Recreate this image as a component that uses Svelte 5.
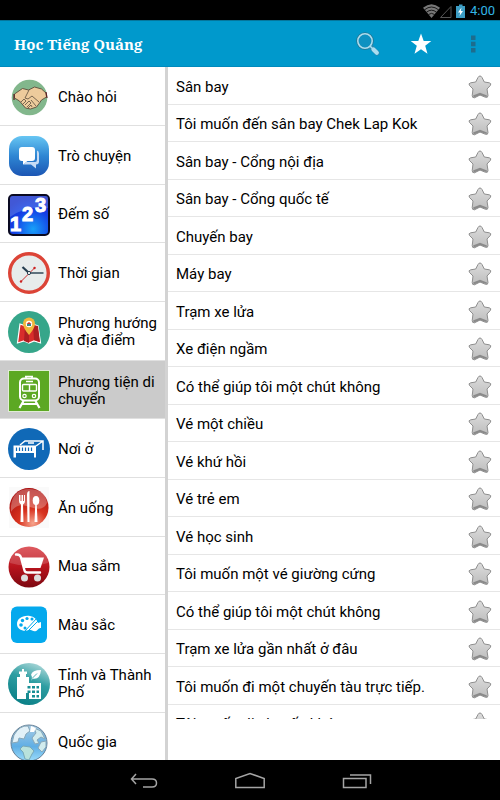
<script lang="ts">
  type Category = { icon: string; name: string };

  const categories: Category[] = [
    { icon: 'hands', name: 'Chào hỏi' },
    { icon: 'chat', name: 'Trò chuyện' },
    { icon: 'numbers', name: 'Đếm số' },
    { icon: 'clock', name: 'Thời gian' },
    { icon: 'map', name: 'Phương hướng và địa điểm' },
    { icon: 'train', name: 'Phương tiện di chuyển' },
    { icon: 'bed', name: 'Nơi ở' },
    { icon: 'food', name: 'Ăn uống' },
    { icon: 'cart', name: 'Mua sắm' },
    { icon: 'palette', name: 'Màu sắc' },
    { icon: 'city', name: 'Tỉnh và Thành Phố' },
    { icon: 'globe', name: 'Quốc gia' },
  ];

  const phrases = [
    'Sân bay',
    'Tôi muốn đến sân bay Chek Lap Kok',
    'Sân bay - Cổng nội địa',
    'Sân bay - Cổng quốc tế',
    'Chuyến bay',
    'Máy bay',
    'Trạm xe lửa',
    'Xe điện ngầm',
    'Có thể giúp tôi một chút không',
    'Vé một chiều',
    'Vé khứ hồi',
    'Vé trẻ em',
    'Vé học sinh',
    'Tôi muốn một vé giường cứng',
    'Có thể giúp tôi một chút không',
    'Trạm xe lửa gần nhất ở đâu',
    'Tôi muốn đi một chuyến tàu trực tiếp.',
    'Tôi muốn đi chuyến khác',
  ];

  let selected = $state(5);
  let starred: boolean[] = $state(phrases.map(() => false));
</script>

<div class="app">
  <div class="status-bar">
    <svg width="42" height="16" viewBox="0 0 42 16" aria-hidden="true">
      <path d="M0 4.800Q8.500-2.500 17 4.800L8.500 15Z" fill="#777" />
      <path d="M1.500 6.800Q8.500 1.200 15.500 6.800M3.500 9.200Q8.500 5.200 13.500 9.200M5.500 11.500Q8.500 9.200 11.500 11.500" fill="none" stroke="#000" stroke-width=".8" />
      <path d="M17.500 14.500H28V3.500Z" fill="none" stroke="#555" />
      <path d="M33 3h3V1.500h3.500V3H42v12h-9Z" fill="#3d9dc4" />
      <path d="M38.500 4.500L35 9.500h2.200l-.7 3.500L40 8h-2.200Z" fill="#fff" />
    </svg>
    <span>4:00</span>
  </div>

  <header class="action-bar">
    <h1>Học Tiếng Quảng</h1>
    <button aria-label="Tìm kiếm">
      <svg width="24" height="24" viewBox="0 0 24 24">
        <circle cx="9" cy="9" r="7.600" fill="#0e91c1" stroke="#24738f" stroke-width="2.400" />
        <path d="M15 15l6 6" stroke="#2b88ac" stroke-width="5" stroke-linecap="round" />
        <circle cx="9" cy="9" r="7.200" fill="none" stroke="#a9ddf0" stroke-width="1.600" />
        <path d="M14 14l3 3" stroke="#a9ddf0" stroke-width="1.500" />
        <path d="M17.500 17.500l3.300 3.300" stroke="#a9ddf0" stroke-width="4.200" stroke-linecap="round" />
      </svg>
    </button>
    <button aria-label="Yêu thích">
      <svg width="24" height="24" viewBox="0 0 24 24">
        <path d="M12 1.500l2.700 7.500h7.600l-6.100 4.800 2.300 8L12 17.200l-6.500 4.600 2.300-8L1.700 9h7.600Z" fill="#fff" />
      </svg>
    </button>
    <button aria-label="Thêm">
      <svg width="24" height="24" viewBox="0 0 24 24">
        <path d="M9 3.500h4.500v4.500H9zM9 9.800h4.500v4.500H9zM9 16h4.500v4.500H9z" fill="#1d6d8d" />
      </svg>
    </button>
  </header>

  <main>
    <nav class="categories">
      {#each categories as category, i}
        <button class="category" class:selected={selected === i} onclick={() => (selected = i)}>
          <svg width="42" height="42" viewBox="0 0 42 42" aria-hidden="true">
            {#if category.icon === 'hands'}
              <circle cx="21.500" cy="21.500" r="17.800" fill="#82b78c" />
              <path d="M6.500 18l8-5.500 6 1.500 6-3 7 2 4.500 4 .5 4-5 3-2 3-3 4-6 2-5-1-6-7-5-3Z" fill="#edcb9c" stroke="#5c4c3c" stroke-width=".9" />
              <path d="M13 26l3-3 2 2-3 3M17 29l4-4 2 2-4 4M20 32l3-3 1 2M28 30l-5-6M31 26l-7-6-4 3-3-1 4-8" fill="none" stroke="#5c4c3c" stroke-width=".8" />
              <path d="M6 18v6M38 16l1 6" stroke="#5b2023" stroke-width="1.200" />
            {:else if category.icon === 'chat'}
              <rect x="1" y="1" width="40" height="40" rx="13" fill="url(#chat-blue)" />
              <path d="M29 15.500q2 .5 2 3v8q0 3-3 3v4l-5-4h-8l3-2.500h9q2 0 2-2.500Z" fill="#c7dcf5" />
              <path d="M14 12h10q3 0 3 3v8q0 3-3 3h-4.500L15 29.500V26h-1q-3 0-3-3v-8q0-3 3-3Z" fill="#fff" />
            {:else if category.icon === 'numbers'}
              <rect x="1" y="1" width="40" height="40" rx="4" fill="url(#number-blue)" stroke="#0a0a22" stroke-width="2" />
              <path d="M2 4q0-2 2-2h34q2 0 2 2v10Q18 11 2 23Z" fill="#9ac0ff" opacity=".3" />
              <text class="digit" x="2" y="37">1</text>
              <text class="digit" x="14" y="27">2</text>
              <text class="digit" x="27" y="18">3</text>
            {:else if category.icon === 'clock'}
              <circle cx="21" cy="21" r="19.300" fill="#e7ecec" stroke="#dc4437" stroke-width="3.400" />
              <path d="M13 29.500L27 15.500" stroke="#cc2b2b" />
              <circle cx="13" cy="29.500" r="1.200" fill="#c22" />
              <circle cx="26.500" cy="16" r="1.200" fill="#c22" />
              <path d="M14.500 15L21 21" stroke="#253e50" stroke-width="2.200" />
              <path d="M21 21h14.500" stroke="#253e50" stroke-width="1.400" />
              <circle cx="21" cy="21" r="1.600" fill="#fff" stroke="#253e50" />
            {:else if category.icon === 'map'}
              <circle cx="21" cy="21" r="21" fill="#36a68a" />
              <path d="M12 13l6 2 6-2 6 2 2.500 17-6.500-2-5 2-5-2-6.500 2Z" fill="#d82d2b" stroke="#fff" stroke-width="1.200" />
              <path d="M17 15l-1 15 5 2V15ZM25 14l5 1 2 16-6-2Z" fill="#ad1f22" />
              <path d="M21 24q-6-7-6-11.500a6 6 0 0 1 12 0Q27 17 21 24Z" fill="#efb83d" />
              <circle cx="21" cy="13" r="3.200" fill="#fff" />
              <path d="M19 13h4v2h-4z" fill="#368b88" />
              <path d="M18.500 13l2.500-2 2.500 2Z" fill="#c33" />
            {:else if category.icon === 'train'}
              <rect x=".5" y=".5" width="41" height="41" fill="#5ca823" stroke="#e0ecd5" />
              <path d="M17 6.500h8M18 6v3M24 6v3M18 11.500h7" stroke="#fff" stroke-width="1.500" />
              <rect x="12" y="8.500" width="19" height="22" rx="4" fill="none" stroke="#fff" stroke-width="2" />
              <rect x="14.500" y="14.500" width="14" height="6.500" rx="1" fill="none" stroke="#fff" stroke-width="1.400" />
              <path d="M21.500 14v7" stroke="#fff" stroke-width="1.400" />
              <path d="M15.500 31l-4 7M27.500 31l4 7M14 34h15" stroke="#fff" stroke-width="2.200" />
              <circle cx="16.500" cy="26" r="1.700" fill="none" stroke="#fff" stroke-width="1.200" />
              <circle cx="26" cy="26" r="1.700" fill="none" stroke="#fff" stroke-width="1.200" />
            {:else if category.icon === 'bed'}
              <circle cx="21" cy="21" r="21" fill="#1069b7" />
              <path d="M5.500 17.500H28v12h-2V25H8v4.500H5.500Z" fill="#fff" />
              <path d="M8.500 19.500v3.500M11.500 19.500v3.500M14.500 19.500v3.500M17.500 19.500v3.500M20.500 19.500v3.500M23.500 19.500v3.500" stroke="#1069b7" stroke-width="1.200" />
              <path d="M12 17l5-4h18v9M35 13l-7 5M20 15h6" fill="none" stroke="#fff" stroke-width="1.500" />
            {:else if category.icon === 'food'}
              <path d="M1 0h40v41H1z" fill="#fafafa" />
              <circle cx="21" cy="20.500" r="19.500" fill="url(#food-red)" />
              <path d="M3 19Q5 2 21 2t18 14Q35 25 22 20T3 25Z" fill="#fff" opacity=".28" />
              <path d="M11 8v6q0 3 2 3.500L12.500 35h3L15 17.500q2-.5 2-3.500V8h-1v6h-1V8h-1.500v6h-1V8Z" fill="#fff" />
              <path d="M19.500 35L19 8q0-4 2.500-4v31Z" fill="#fff" />
              <ellipse cx="28" cy="13.500" rx="3.300" ry="4.500" fill="#fff" />
              <path d="M27.300 16h1.400l.8 19h-3Z" fill="#fff" />
            {:else if category.icon === 'cart'}
              <circle cx="21" cy="21" r="20.500" fill="url(#cart-red)" />
              <path d="M2 17A19 19 0 0 1 40 17Q22 23 2 17Z" fill="#fff" opacity=".16" />
              <path d="M8 8.500q4-.5 5 3l3.500 13q.5 2 3 2H32" fill="none" stroke="#fff" stroke-width="2.400" stroke-linecap="round" />
              <path d="M13.500 11.500H36L32.500 22h-16Z" fill="#fff" />
              <circle cx="16.500" cy="32" r="3.500" fill="#ddd" />
              <circle cx="29.500" cy="32" r="3.500" fill="#ddd" />
            {:else if category.icon === 'palette'}
              <rect x="3" y="2.500" width="36" height="36.500" rx="6" fill="#04a9ed" />
              <path d="M22 12c-8-1-13 3-13 8 0 6 7 8 12 6 2-1 4 2 7 1 2-.5 2-3 5-3V18l-3 1q-2-6-8-7Z" fill="#fff" />
              <g fill="#04a9ed">
                <circle cx="13" cy="21" r="1.800" />
                <circle cx="14.500" cy="16.500" r="1.700" />
                <circle cx="19" cy="14.500" r="1.600" />
                <circle cx="24" cy="15" r="1.500" />
                <circle cx="17" cy="24" r="1.500" />
              </g>
              <path d="M17 27L29 14M19.500 27.500L30 17" stroke="#04a9ed" />
            {:else if category.icon === 'city'}
              <circle cx="21" cy="21" r="21" fill="url(#city-teal)" />
              <path d="M9 36V14h3v-3h-1V8.500h3V6h2v2.500h3V11h-1v3h3v6h12v16H21v-6h-3v6Z" fill="#fff" />
              <path d="M19.500 23h3v2.500h-3zM24 23h3v2.500h-3zM28.500 23h2.500v2.500h-2.500zM19.500 27.500h3V30h-3zM24 27.500h3V30h-3zM28.500 27.500h2.500V30h-2.500zM24 32h3v2.500h-3zM28.500 32h2.500v2.500h-2.500z" fill="#168e94" />
              <path d="M23.500 18q1-5-.5-6 1-5 10-5-1 10-8.500 8.500Z" fill="#fff" />
              <path d="M24 15.500l5-5" stroke="#54b4b8" />
            {:else}
              <circle cx="21" cy="21" r="18" fill="url(#globe-blue)" stroke="#668097" />
              <path d="M6 13q6-10 14-9l2 5-4 3-2 5-5-1-1 4-6 1Z" fill="#e2f1f8" stroke="#87a7b9" />
              <path d="M15 24l7 1 4 4-2 3-3 6-4-1-2-7-3-3Z" fill="#b8e2dc" stroke="#79a9b7" />
              <path d="M26 6l7 3 4 8-4-2-4 3 2 3-4 1-3-6 4-5ZM33 20l5-1v6l-4 5-4-4Z" fill="#d2ecee" stroke="#87a7b9" />
              <path d="M23 4l5 2-2 4h-4Z" fill="#fff" />
            {/if}
          </svg>
          <span>{category.name}</span>
        </button>
      {/each}
    </nav>

    <ul class="phrases">
      {#each phrases as phrase, i}
        <li>
          <span>{phrase}</span>
          <button aria-label="Đánh dấu {phrase}" aria-pressed={starred[i]} onclick={() => (starred[i] = !starred[i])}>
            <svg class:starred={starred[i]} width="24" height="24" viewBox="0 0 24 24">
              <path d="M12 1q1.300 0 2 1.500L16.300 7l5 .8q2.500.7 1 2.700L19 14l1 6.500q0 2.500-2.500 1.800L12 20l-5.500 2.800Q4 23 4.200 20.500L5 14 1.500 10.500Q0 8.500 2.700 7.800l5-.8L10 2.500Q10.700 1 12 1Z" fill="url(#star-gray)" stroke="#8e8e8e" />
              <path d="M5 20.500l7-2.800 7 2.800-.5 1.500-6.500-2L6 22.500Z" fill="#8a8a8a" />
            </svg>
          </button>
        </li>
      {/each}
    </ul>
  </main>

  <footer class="system-nav">
    <button aria-label="Quay lại">
      <svg width="30" height="20" viewBox="0 0 30 20">
        <path d="M8 4L3.500 9 8 14M4 9h20q4.500 0 4.500 4t-4.500 4H15" />
      </svg>
    </button>
    <button aria-label="Màn hình chính">
      <svg width="30" height="20" viewBox="0 0 30 20">
        <path d="M.8 17.500V8.500L15 3.500l14.200 5v9Z" />
      </svg>
    </button>
    <button aria-label="Gần đây">
      <svg width="30" height="20" viewBox="0 0 30 20">
        <path d="M1.500 8.500H24v9H1.500ZM8 5h20.500v9" />
      </svg>
    </button>
  </footer>

  <!-- gradients shared by the icons -->
  <svg class="defs" width="0" height="0" aria-hidden="true">
    <defs>
      <linearGradient id="chat-blue" x2="0" y2="1">
        <stop stop-color="#67c6f3" />
        <stop offset=".5" stop-color="#2e86d3" />
        <stop offset="1" stop-color="#1c56b4" />
      </linearGradient>
      <radialGradient id="number-blue" cx=".6" cy=".85" r=".8">
        <stop stop-color="#18a0f8" />
        <stop offset=".6" stop-color="#1440e6" />
        <stop offset="1" stop-color="#1a2cc4" />
      </radialGradient>
      <radialGradient id="food-red" cx=".6" cy=".9" r=".9">
        <stop stop-color="#f6a48d" />
        <stop offset=".4" stop-color="#d8331f" />
        <stop offset="1" stop-color="#a80d0d" />
      </radialGradient>
      <linearGradient id="cart-red" x2="0" y2="1">
        <stop stop-color="#d83a41" />
        <stop offset=".5" stop-color="#b8141d" />
        <stop offset="1" stop-color="#7c0810" />
      </linearGradient>
      <linearGradient id="city-teal" x1=".8" y1="0" x2=".4" y2="1">
        <stop stop-color="#b5dcdd" />
        <stop offset=".45" stop-color="#2e9ea2" />
        <stop offset="1" stop-color="#0b8087" />
      </linearGradient>
      <linearGradient id="globe-blue" x2="0" y2="1">
        <stop stop-color="#a9cde4" />
        <stop offset=".6" stop-color="#5faee5" />
        <stop offset="1" stop-color="#9bdcfa" />
      </linearGradient>
      <linearGradient id="star-gray" x2="0" y2="1">
        <stop stop-color="#dcdcdc" />
        <stop offset="1" stop-color="#bdbdbd" />
      </linearGradient>
    </defs>
  </svg>
</div>

<style>
  :global(body) {
    margin: 0;
    background: #000;
  }

  .app {
    display: flex;
    flex-direction: column;
    height: 100vh;
    font-family: Roboto, "Noto Sans", sans-serif;
    font-size: 15px;
    color: #000;
  }

  button {
    padding: 0;
    border: none;
    background: none;
    font: inherit;
    color: inherit;
    cursor: pointer;
  }

  svg {
    flex-shrink: 0;
    display: block;
  }

  .defs {
    position: absolute;
  }

  .status-bar {
    flex: none;
    box-sizing: border-box;
    height: 20px;
    display: flex;
    align-items: center;
    justify-content: flex-end;
    gap: 5px;
    padding: 1px 5px 0 0;
    font-size: 13px;
    color: #33b5e5;
  }

  .action-bar {
    flex: none;
    box-sizing: border-box;
    height: 47px;
    display: flex;
    align-items: center;
    padding-left: 14px;
    background: #0099cc;
    border-top: 1px solid #05769c;
    border-bottom: 1px solid #008abd;
  }

  h1 {
    flex: 1;
    margin: 0;
    font-family: "Noto Serif", "Droid Serif", "Liberation Serif", serif;
    font-size: 15px;
    font-weight: 700;
    color: #fff;
  }

  .action-bar button {
    width: 53px;
    height: 45px;
    display: grid;
    place-items: center;
  }

  main {
    flex: 1;
    min-height: 0;
    display: flex;
    background: #fff;
  }

  .categories {
    flex: 0 0 33%;
    overflow: hidden;
    border-right: 3px solid #d3d3d3;
  }

  .category {
    box-sizing: border-box;
    width: 100%;
    height: 59px;
    display: flex;
    align-items: center;
    gap: 8px;
    padding: 2px 0 0 8px;
    border-bottom: 1px solid #e0e0e0;
    line-height: 17px;
    text-align: left;
  }

  .category:nth-child(3n) {
    height: 58px;
  }

  .category.selected {
    background: #cbcbcb;
  }

  .digit {
    font-family: "Liberation Sans", sans-serif;
    font-size: 20px;
    font-weight: 700;
    fill: #fff;
    stroke: #fff;
  }

  .phrases {
    flex: 1;
    min-width: 0;
    margin: 0 0 41px;
    padding: 0;
    overflow: hidden;
    list-style: none;
  }

  .phrases li {
    box-sizing: border-box;
    height: 37px;
    display: flex;
    align-items: center;
    justify-content: space-between;
    padding: 2px 8px 0;
    border-bottom: 1px solid #e6e6e6;
    white-space: nowrap;
  }

  .phrases li:nth-child(odd) {
    height: 38px;
  }

  .starred {
    filter: sepia(1) saturate(5);
  }

  .system-nav {
    flex: none;
    height: 40px;
    display: flex;
    align-items: center;
    justify-content: center;
    gap: 77px;
  }

  .system-nav path {
    fill: none;
    stroke: #a5a5a5;
    stroke-width: 1.5;
  }
</style>
